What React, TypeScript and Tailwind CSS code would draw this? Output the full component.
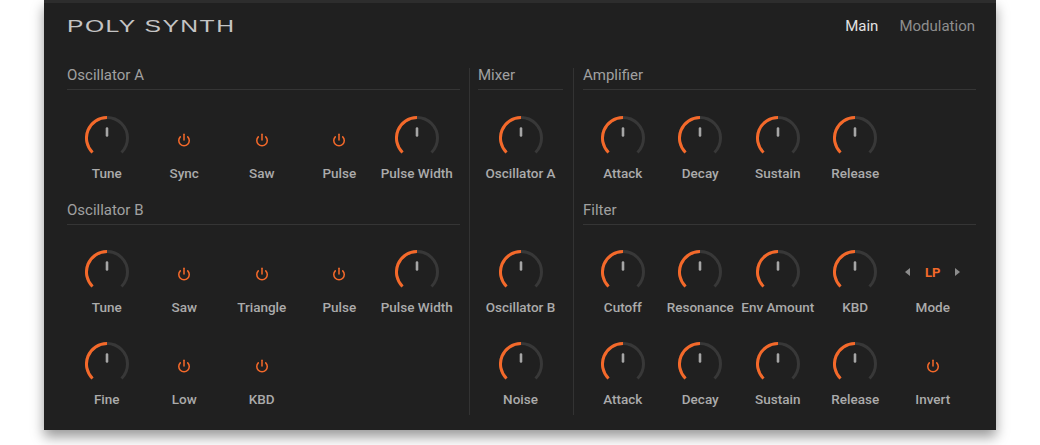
import { Power } from 'lucide-react';

type Control =
  | { kind: 'knob'; label: string }
  | { kind: 'toggle'; label: string }
  | { kind: 'mode'; label: string; value: string }
  | { kind: 'empty' };

const ORANGE = '#f4692a';

const knob = (label: string): Control => ({ kind: 'knob', label });
const toggle = (label: string): Control => ({ kind: 'toggle', label });

const OSC_A: Control[] = [knob('Tune'), toggle('Sync'), toggle('Saw'), toggle('Pulse'), knob('Pulse Width')];
const OSC_B: Control[] = [knob('Tune'), toggle('Saw'), toggle('Triangle'), toggle('Pulse'), knob('Pulse Width')];
const OSC_B_EXTRA: Control[] = [knob('Fine'), toggle('Low'), toggle('KBD')];
const AMP: Control[] = [knob('Attack'), knob('Decay'), knob('Sustain'), knob('Release'), { kind: 'empty' }];
const FILTER: Control[] = [
  knob('Cutoff'),
  knob('Resonance'),
  knob('Env Amount'),
  knob('KBD'),
  { kind: 'mode', label: 'Mode', value: 'LP' },
];
const FILTER_ENV: Control[] = [knob('Attack'), knob('Decay'), knob('Sustain'), knob('Release'), toggle('Invert')];

function Knob() {
  return (
    <svg width="44" height="44" viewBox="0 0 44 44" fill="none">
      <path d="M 7.5 36.5 A 20.5 20.5 0 1 1 36.5 36.5" stroke="#383838" strokeWidth="3" />
      <path d="M 7.5 36.5 A 20.5 20.5 0 0 1 22 1.5" stroke={ORANGE} strokeWidth="3" />
      <line x1="22" y1="12.5" x2="22" y2="19.5" stroke="#a6a6a6" strokeWidth="2.6" strokeLinecap="round" />
    </svg>
  );
}

function ModeSelector({ value }: { value: string }) {
  return (
    <div className="flex items-center gap-[14px]">
      <svg width="6" height="8" viewBox="0 0 6 8">
        <polygon points="5,0 5,8 0,4" fill="#8c8c8c" />
      </svg>
      <span className="text-[13px] font-bold leading-none" style={{ color: ORANGE }}>
        {value}
      </span>
      <svg width="6" height="8" viewBox="0 0 6 8">
        <polygon points="1,0 1,8 6,4" fill="#8c8c8c" />
      </svg>
    </div>
  );
}

function Cell({ control, width = 'w-[77.5px]' }: { control: Control; width?: string }) {
  if (control.kind === 'empty') return <div className={`${width} h-[66px]`} />;
  return (
    <div className={`${width} flex h-[66px] flex-col items-center`}>
      <div className="flex h-[44px] w-full items-center justify-center">
        {control.kind === 'knob' && <Knob />}
        {control.kind === 'toggle' && (
          <Power size={14} strokeWidth={2.6} color={ORANGE} className="mt-[4px]" />
        )}
        {control.kind === 'mode' && <ModeSelector value={control.value} />}
      </div>
      <span className="mt-[5px] whitespace-nowrap text-[13.5px] font-medium leading-4 text-[#ababab]">
        {control.label}
      </span>
    </div>
  );
}

function Row({ controls, className = '' }: { controls: Control[]; className?: string }) {
  return (
    <div className={`flex pl-[1px] ${className}`}>
      {controls.map((c, i) => (
        <Cell key={i} control={c} />
      ))}
    </div>
  );
}

function SectionHeader({ title, className = '' }: { title: string; className?: string }) {
  return (
    <div className={`border-b border-[#353535] pb-[4px] ${className}`}>
      <p className="h-5 text-[15px] leading-5 text-[#a0a0a0]">{title}</p>
    </div>
  );
}

function Divider() {
  return <div className="mt-[21px] h-[347px] w-px bg-[#333333]" />;
}

export default function App() {
  return (
    <div className="h-[445px] w-[1040px] bg-white" style={{ fontFamily: 'Roboto, "Liberation Sans", sans-serif' }}>
      <div className="ml-[44px] h-[430px] w-[952px] border-t-[3px] border-[#2d2d2d] bg-[#202020] pl-[23px] pr-[20px] shadow-[0_7px_12px_rgba(0,0,0,0.4)]">
        <header className="flex h-[46px] items-center justify-between">
          <h1
            className="origin-left scale-x-[1.45] text-[17px] font-normal leading-none tracking-[1px] text-[#c4c4c4]"
            style={{ fontFamily: '"Liberation Sans", sans-serif' }}
          >
            POLY SYNTH
          </h1>
          <nav className="mr-[1px] flex items-center gap-[21px] text-[15px]">
            <span className="text-[#e2e2e2]">Main</span>
            <span className="text-[#8e8e8e]">Modulation</span>
          </nav>
        </header>

        <div className="-mt-[2px] flex">
          <section className="w-[393px] pt-[18px]">
            <SectionHeader title="Oscillator A" />
            <Row controls={OSC_A} className="mt-[26px]" />
            <SectionHeader title="Oscillator B" className="mt-[18px]" />
            <Row controls={OSC_B} className="mt-[25px]" />
            <Row controls={OSC_B_EXTRA} className="mt-[26px]" />
          </section>

          <div className="ml-[9px]">
            <Divider />
          </div>

          <section className="ml-[8px] w-[85px] pt-[18px]">
            <SectionHeader title="Mixer" />
            <div className="mt-[26px]">
              <Cell control={knob('Oscillator A')} width="w-[85px]" />
            </div>
            <div className="mt-[68px]">
              <Cell control={knob('Oscillator B')} width="w-[85px]" />
            </div>
            <div className="mt-[26px]">
              <Cell control={knob('Noise')} width="w-[85px]" />
            </div>
          </section>

          <div className="ml-[10px]">
            <Divider />
          </div>

          <section className="ml-[9px] w-[393px] pt-[18px]">
            <SectionHeader title="Amplifier" />
            <Row controls={AMP} className="mt-[26px]" />
            <SectionHeader title="Filter" className="mt-[18px]" />
            <Row controls={FILTER} className="mt-[25px]" />
            <Row controls={FILTER_ENV} className="mt-[26px]" />
          </section>
        </div>
      </div>
    </div>
  );
}
